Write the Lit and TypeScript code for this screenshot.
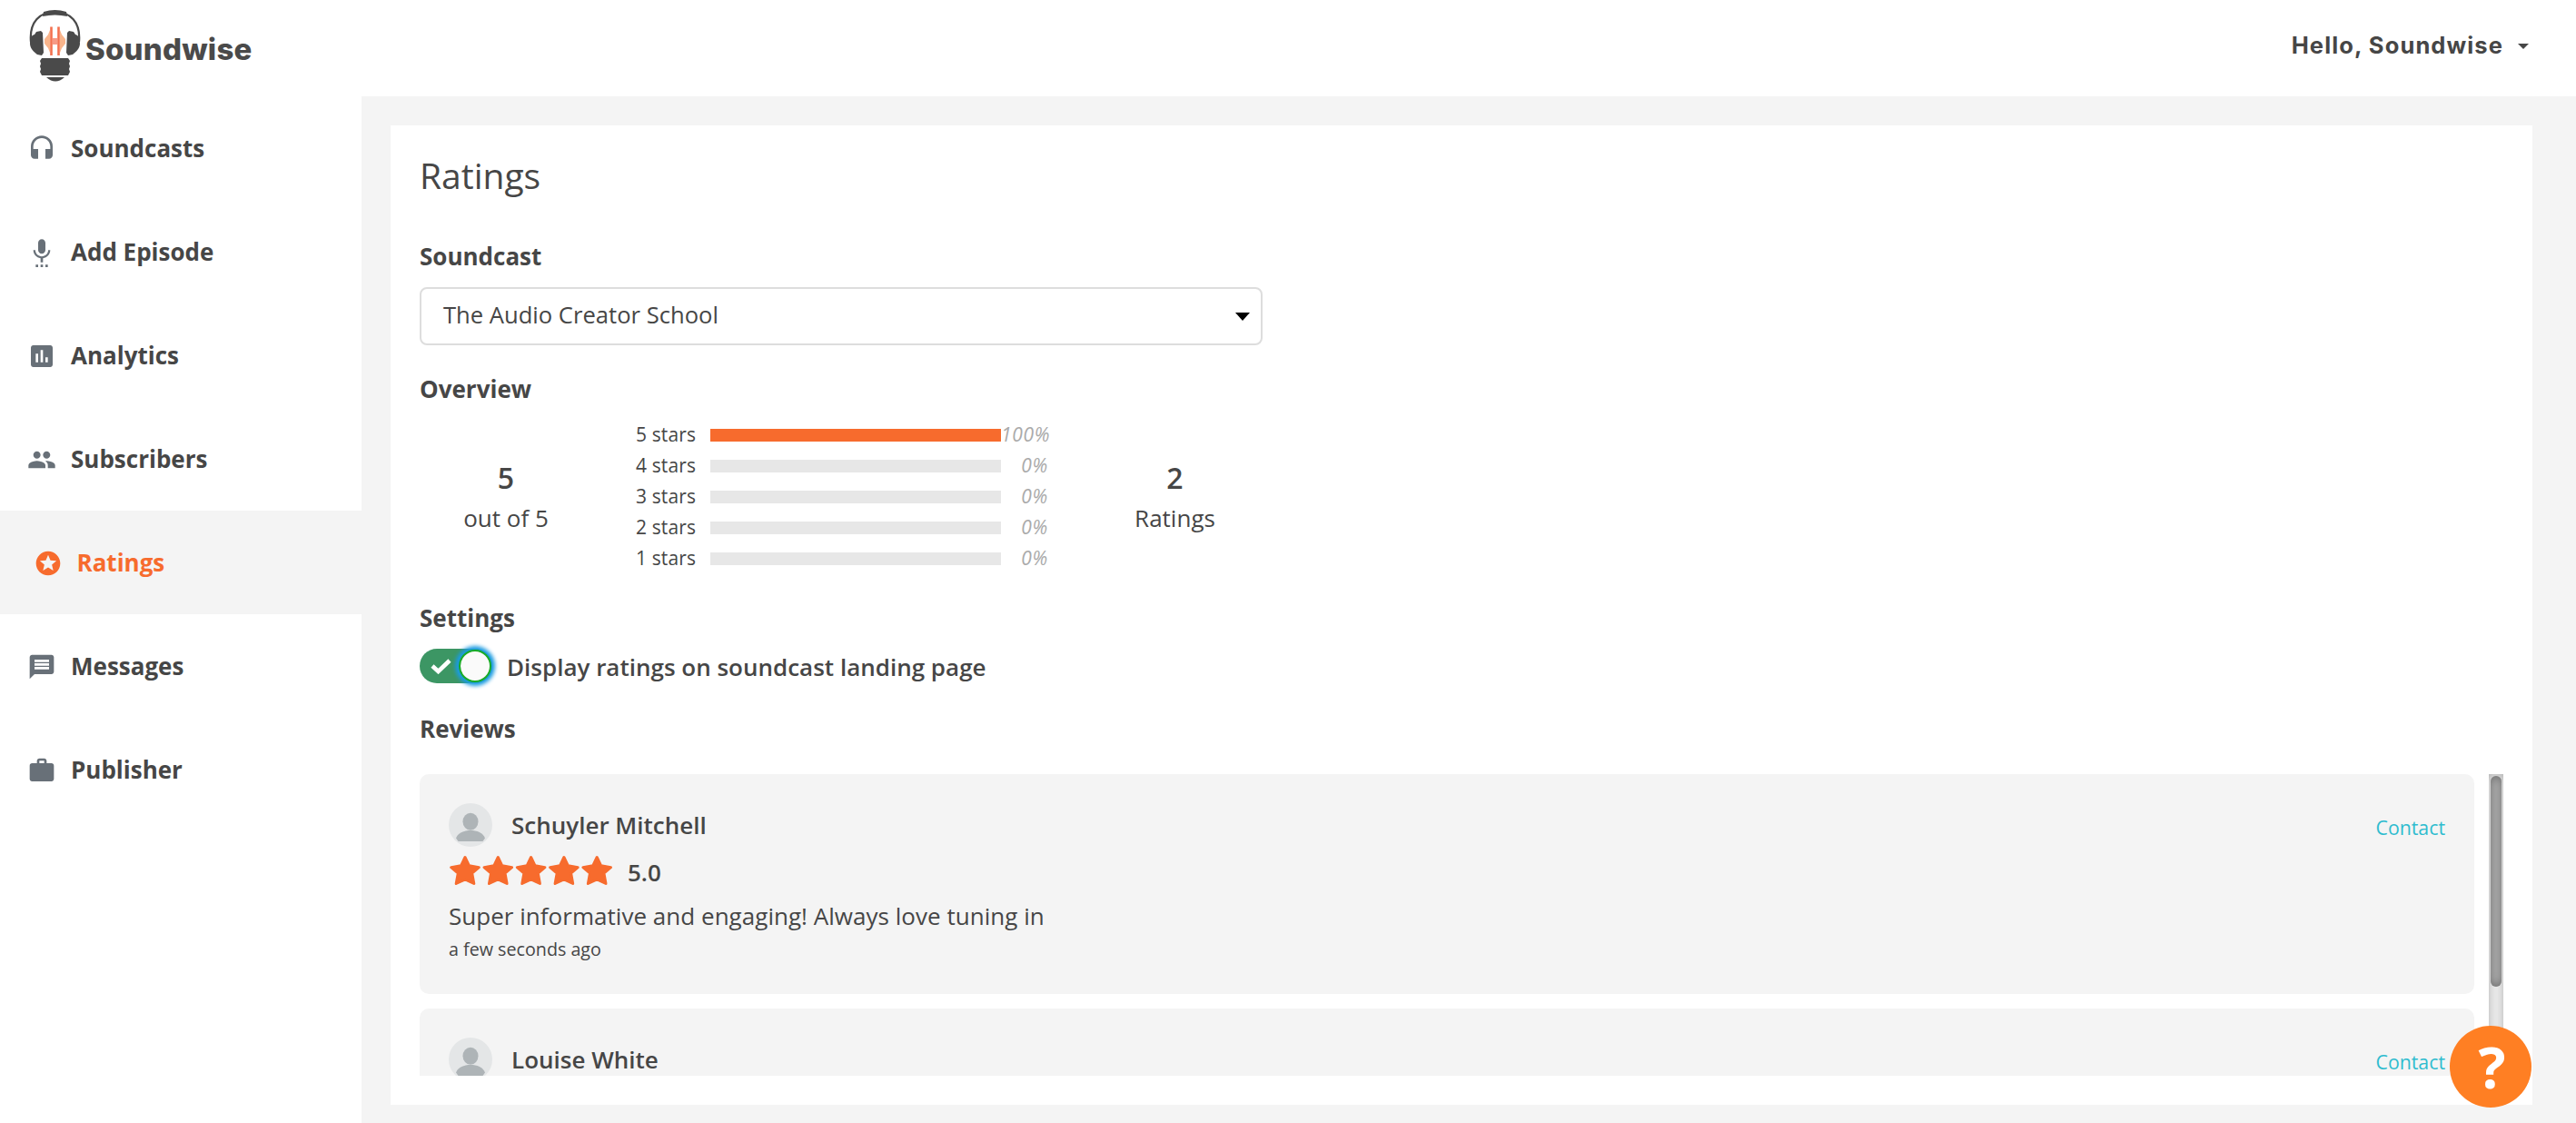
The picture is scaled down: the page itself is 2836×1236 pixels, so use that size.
import {html, svg, LitElement, css} from 'lit';
import {customElement, property} from 'lit/decorators.js';
import {classMap} from 'lit/directives/class-map.js';

const ICONS: Record<string, string> = {
  headset:
    'M12 1a9 9 0 0 0-9 9v7c0 1.66 1.34 3 3 3h3v-8H5v-2c0-3.87 3.13-7 7-7s7 3.13 7 7v2h-4v8h3c1.66 0 3-1.34 3-3v-7a9 9 0 0 0-9-9z',
  mic: 'M7 24h2v-2H7v2zm5-11c1.66 0 2.99-1.34 2.99-3L15 4c0-1.66-1.34-3-3-3S9 2.34 9 4v6c0 1.66 1.34 3 3 3zm-1 11h2v-2h-2v2zm4 0h2v-2h-2v2zm4-14h-1.7c0 3-2.54 5.1-5.3 5.1S6.7 13 6.7 10H5c0 3.41 2.72 6.23 6 6.72V20h2v-3.28c3.28-.49 6-3.31 6-6.72z',
  chart:
    'M19 3H5c-1.1 0-2 .9-2 2v14c0 1.1.9 2 2 2h14c1.1 0 2-.9 2-2V5c0-1.1-.9-2-2-2zM9 17H7v-7h2v7zm4 0h-2V7h2v10zm4 0h-2v-4h2v4z',
  people:
    'M16 11c1.66 0 2.99-1.34 2.99-3S17.66 5 16 5c-1.66 0-3 1.34-3 3s1.34 3 3 3zm-8 0c1.66 0 2.99-1.34 2.99-3S9.66 5 8 5C6.34 5 5 6.34 5 8s1.34 3 3 3zm0 2c-2.33 0-7 1.17-7 3.5V19h14v-2.5c0-2.33-4.67-3.5-7-3.5zm8 0c-.29 0-.62.02-.97.05 1.16.84 1.97 1.97 1.97 3.45V19h6v-2.5c0-2.33-4.67-3.5-7-3.5z',
  stars:
    'M11.99 2C6.47 2 2 6.48 2 12s4.47 10 9.99 10C17.52 22 22 17.52 22 12S17.52 2 11.99 2zm4.24 16L12 15.45 7.77 18l1.12-4.81-3.73-3.23 4.92-.42L12 5l1.92 4.53 4.92.42-3.73 3.23L16.23 18z',
  message:
    'M20 2H4c-1.1 0-1.99.9-1.99 2L2 22l4-4h14c1.1 0 2-.9 2-2V4c0-1.1-.9-2-2-2zm-2 12H6v-2h12v2zm0-3H6V9h12v2zm0-3H6V6h12v2z',
  work: 'M20 6h-4V4c0-1.11-.89-2-2-2h-4c-1.11 0-2 .89-2 2v2H4c-1.11 0-1.99.89-1.99 2L2 19c0 1.11.89 2 2 2h16c1.11 0 2-.89 2-2V8c0-1.11-.89-2-2-2zm-6 0h-4V4h4v2z',
};

const NAV = [
  {icon: 'headset', label: 'Soundcasts'},
  {icon: 'mic', label: 'Add Episode'},
  {icon: 'chart', label: 'Analytics'},
  {icon: 'people', label: 'Subscribers'},
  {icon: 'stars', label: 'Ratings', active: true},
  {icon: 'message', label: 'Messages'},
  {icon: 'work', label: 'Publisher'},
];

const DISTRIBUTION = [
  {stars: 5, percent: 100},
  {stars: 4, percent: 0},
  {stars: 3, percent: 0},
  {stars: 2, percent: 0},
  {stars: 1, percent: 0},
];

@customElement('sw-header')
export class Header extends LitElement {
  static styles = css`
    :host {
      display: flex;
      justify-content: space-between;
      height: 106px;
      box-sizing: border-box;
      padding: 10px 52px 0 32px;
      background: #fff;
      color: #4a4a4a;
      font-family: Inter, sans-serif;
    }

    .logo {
      display: flex;
      align-items: flex-start;
      gap: 5px;
    }

    .logo svg {
      width: 57px;
      height: 80px;
    }

    .wordmark {
      margin-top: 24px;
      font-size: 33px;
      line-height: 40px;
      font-weight: 800;
      letter-spacing: 0.2px;
    }

    .user {
      display: flex;
      align-items: center;
      gap: 16px;
      height: 78px;
      font-size: 25.500px;
      font-weight: 700;
      letter-spacing: 1.1px;
      color: #464646;
    }

    .caret {
      border: 6px solid transparent;
      border-top-color: #464646;
      border-bottom: 0;
      margin-top: 4px;
    }
  `;

  render() {
    return html`
      <div class="logo">
        <svg viewBox="0 0 57 80" fill="#4a4a4a">
          <path
            d="M2 36C0 14 12 3 28.500 3S57 14 55 36"
            fill="none"
            stroke="#4a4a4a"
            stroke-width="2.200"
          />
          <path d="M16 3Q28.500-1 41 3L42 8Q28.500 5 15 8Z" />
          <path d="M8 25l5-1 2 2 1 22-2 3-5-1C5 47 1 43 1 38s1-9 5-10z" />
          <path d="M49 25l-5-1-2 2-1 22 2 3 5-1c4-3 8-7 8-12s-1-9-5-10z" />
          <path
            d="M14 54h29l2 3-1 3 1 3-1 3 1 3-2 4H14l-2-4 1-3-1-3 1-3-1-3z"
          />
          <path d="M19 75h20q-10 9-20 0z" />
          <path
            d="M17 33l4-5 2-5v25l-2-5-4-5zM40 33l-4-5-2-5v25l2-5 4-5z"
            fill="#f9b58c"
          />
          <path d="M26 32h5v7h-5z" fill="#f79a86" />
          <path
            d="M24.500 19.500v31.500M32.500 19.500v31.500"
            stroke="#f4714f"
            stroke-width="2.600"
          />
        </svg>
        <span class="wordmark">Soundwise</span>
      </div>
      <div class="user">
        <span>Hello, Soundwise</span>
        <span class="caret"></span>
      </div>
    `;
  }
}

@customElement('sw-sidebar')
export class Sidebar extends LitElement {
  static styles = css`
    :host {
      display: block;
      width: 398px;
      background: #fff;
    }

    .item {
      display: flex;
      align-items: center;
      gap: 16px;
      height: 114px;
      box-sizing: border-box;
      padding-left: 30px;
      font-size: 26px;
      font-weight: 700;
      color: #464646;
    }

    .item span {
      margin-bottom: 1px;
    }

    .item svg {
      width: 32px;
      height: 32px;
      margin-top: 2px;
      fill: #687078;
    }

    .item.active {
      padding-left: 36.500px;
      background: #f4f4f4;
      color: #f76b2d;
    }

    .item.active svg {
      fill: #f76b2d;
    }
  `;

  render() {
    return NAV.map(
      (item) => html`
        <div class=${classMap({item: true, active: !!item.active})}>
          <svg viewBox="0 0 24 24"><path d=${ICONS[item.icon]} /></svg>
          <span>${item.label}</span>
        </div>
      `
    );
  }
}

@customElement('sw-review')
export class Review extends LitElement {
  static styles = css`
    :host {
      display: block;
      height: 242px;
      flex: none;
      box-sizing: border-box;
      padding: 32px;
      border-radius: 10px;
      background: #f4f4f4;
    }

    .top {
      display: flex;
      align-items: center;
      height: 48px;
    }

    .avatar {
      width: 48px;
      height: 48px;
      margin-right: 21px;
    }

    .name {
      flex: 1;
      font-weight: 600;
      font-size: 26px;
    }

    .contact {
      font-size: 21.300px;
      color: #2fbccf;
      margin-top: 4px;
    }

    .rating {
      display: flex;
      align-items: flex-start;
      height: 50px;
      padding-top: 9px;
      box-sizing: border-box;
    }

    .stars {
      width: 182px;
      height: 34px;
      fill: #f76b2d;
      margin-right: 15px;
    }

    .score {
      font-size: 26px;
      font-weight: 600;
      line-height: 38px;
    }

    .comment {
      font-size: 26px;
      line-height: 36px;
      margin-top: 8px;
      letter-spacing: 0.03px;
    }

    .date {
      font-size: 19.700px;
      line-height: 38px;
    }
  `;

  @property() name = '';
  @property() score = '';
  @property() comment = '';
  @property() date = '';

  render() {
    return html`
      <div class="top">
        <svg class="avatar" viewBox="0 0 48 48">
          <circle cx="24" cy="24" r="24" fill="#e4e6e7" />
          <ellipse cx="24" cy="20.200" rx="8.500" ry="9.500" fill="#aeb4b7" />
          <path
            d="M8 38.500C10 32.500 17 30 24 30s14 2.500 16 8.500l-2.500 3.500h-27z"
            fill="#aeb4b7"
          />
        </svg>
        <span class="name">${this.name}</span>
        <span class="contact">Contact</span>
      </div>
      <div class="rating">
        <svg class="stars" viewBox="0 0 182 34">
          ${[0, 1, 2, 3, 4].map(
            (i) => svg`<path transform="translate(${i * 36.3} 0)" stroke="#f76b2d" stroke-width="3"
              stroke-linejoin="round"
              d="M18 2.500L22.500 11.800 33.300 13.700 25.700 20 27.800 31.500 18 27 8.200 31.500 10.300 20 2.700 13.700 13.500 11.800z" />`
          )}
        </svg>
        <span class="score">${this.score}</span>
      </div>
      <div class="comment">${this.comment}</div>
      <div class="date">${this.date}</div>
    `;
  }
}

@customElement('sw-ratings')
export class Ratings extends LitElement {
  static styles = css`
    :host {
      display: flex;
      flex-direction: column;
      box-sizing: border-box;
      height: 1078px;
      padding: 32px;
      background: #fff;
    }

    h1 {
      margin: -2px 0 0;
      font-size: 39px;
      line-height: 50px;
      font-weight: 400;
    }

    h2 {
      margin: 0;
      font-size: 26px;
      line-height: 36px;
      font-weight: 700;
    }

    .soundcast {
      margin-top: 46px;
    }

    .select {
      display: flex;
      align-items: center;
      justify-content: space-between;
      width: 928px;
      height: 64px;
      box-sizing: border-box;
      margin-top: 16px;
      padding: 0 12px 0 24px;
      border: 2px solid #ddd;
      border-radius: 8px;
      font-size: 25.600px;
    }

    .select span {
      margin-bottom: 4px;
    }

    .arrow {
      border: 8px solid transparent;
      border-top: 9px solid #000;
      border-bottom: 0;
    }

    .overview {
      margin-top: 30px;
    }

    .summary {
      display: grid;
      grid-template-columns: 190px 545px 193px;
      width: 928px;
      height: 170px;
      margin-top: 16px;
      align-items: center;
    }

    .total {
      text-align: center;
      font-size: 26px;
      line-height: 36px;
      padding-bottom: 7px;
    }

    .total strong {
      display: block;
      font-size: 32px;
      line-height: 52px;
      font-weight: 600;
    }

    .row {
      display: grid;
      grid-template-columns: 114px 320px 52px;
      column-gap: 0;
      align-items: center;
      height: 34px;
      font-size: 21px;
    }

    .row {
      grid-template-columns: 130px 320px 52px;
    }

    .label {
      width: 114px;
      margin-bottom: 2px;
      text-align: right;
      letter-spacing: 0.1px;
    }

    .bar {
      height: 14px;
      background: #e7e7e7;
    }

    .fill {
      height: 14px;
      background: #f76b2d;
    }

    .percent {
      margin-bottom: 2px;
      text-align: right;
      font-style: italic;
      letter-spacing: 0.7px;
      color: #aaa;
    }

    .settings {
      margin-top: 30px;
    }

    .setting {
      display: flex;
      align-items: center;
      gap: 16px;
      height: 38px;
      margin-top: 16px;
      font-size: 26px;
      font-weight: 600;
    }

    .text {
      margin-top: 1px;
    }

    .toggle {
      display: flex;
      align-items: center;
      justify-content: space-between;
      width: 80px;
      height: 38px;
      box-sizing: border-box;
      padding: 0 1px 0 12px;
      border-radius: 19px;
      background: #3c9664;
    }

    .toggle svg {
      width: 23px;
      height: 17px;
    }

    .thumb {
      width: 36px;
      height: 36px;
      box-sizing: border-box;
      border: 2px solid #19ab27;
      border-radius: 50%;
      background: #fafafa;
      box-shadow: 0 0 4px 4px #1a9be0;
    }

    .reviews {
      margin-top: 32px;
    }

    .scroller {
      display: flex;
      gap: 16px;
      height: 332px;
      margin-top: 32px;
      overflow: hidden;
    }

    .list {
      flex: 1;
      display: flex;
      flex-direction: column;
      gap: 16px;
    }

    .track {
      width: 16px;
      height: 332px;
      box-sizing: border-box;
      padding: 2px;
      background: #f2f2f2;
      box-shadow: inset 0 0 12px rgba(0, 0, 0, 0.3);
    }

    .handle {
      width: 12px;
      height: 232px;
      border-radius: 6px;
      background: #b8b8b8;
      box-shadow: inset 0 0 12px rgba(0, 0, 0, 0.45);
    }
  `;

  render() {
    return html`
      <h1>Ratings</h1>
      <h2 class="soundcast">Soundcast</h2>
      <div class="select">
        <span>The Audio Creator School</span>
        <i class="arrow"></i>
      </div>
      <h2 class="overview">Overview</h2>
      <div class="summary">
        <div class="total"><strong>5</strong>out of 5</div>
        <div>
          ${DISTRIBUTION.map(
            (row) => html`
              <div class="row">
                <span class="label">${row.stars} stars</span>
                <div class="bar">
                  <div class="fill" style="width: ${row.percent}%"></div>
                </div>
                <span class="percent">${row.percent}%</span>
              </div>
            `
          )}
        </div>
        <div class="total"><strong>2</strong>Ratings</div>
      </div>
      <h2 class="settings">Settings</h2>
      <div class="setting">
        <div class="toggle">
          <svg viewBox="0 0 23 17">
            <path
              d="M2 8l6.500 6L21 2"
              fill="none"
              stroke="#fff"
              stroke-width="4.600"
            />
          </svg>
          <span class="thumb"></span>
        </div>
        <span class="text">Display ratings on soundcast landing page</span>
      </div>
      <h2 class="reviews">Reviews</h2>
      <div class="scroller">
        <div class="list">
          <sw-review
            name="Schuyler Mitchell"
            score="5.0"
            comment="Super informative and engaging! Always love tuning in"
            date="a few seconds ago"
          ></sw-review>
          <sw-review name="Louise White"></sw-review>
        </div>
        <div class="track"><div class="handle"></div></div>
      </div>
    `;
  }
}

@customElement('app-root')
export class AppRoot extends LitElement {
  static styles = css`
    :host {
      display: flex;
      flex-direction: column;
      height: 1236px;
      overflow: hidden;
      background: #f4f4f4;
      color: #464646;
      font-family: 'Open Sans', sans-serif;
    }

    .body {
      display: flex;
      flex: 1;
    }

    .content {
      flex: 1;
      padding: 32px 48px 20px 32px;
    }

    .help {
      position: fixed;
      right: 49px;
      bottom: 17px;
      width: 90px;
      height: 90px;
      border-radius: 50%;
      background: #ff7f23;
      color: #fff;
      font-size: 63px;
      line-height: 89px;
      font-weight: 700;
      text-align: center;
      text-indent: 3px;
    }
  `;

  render() {
    return html`
      <sw-header></sw-header>
      <div class="body">
        <sw-sidebar></sw-sidebar>
        <main class="content"><sw-ratings></sw-ratings></main>
      </div>
      <div class="help">?</div>
    `;
  }
}
